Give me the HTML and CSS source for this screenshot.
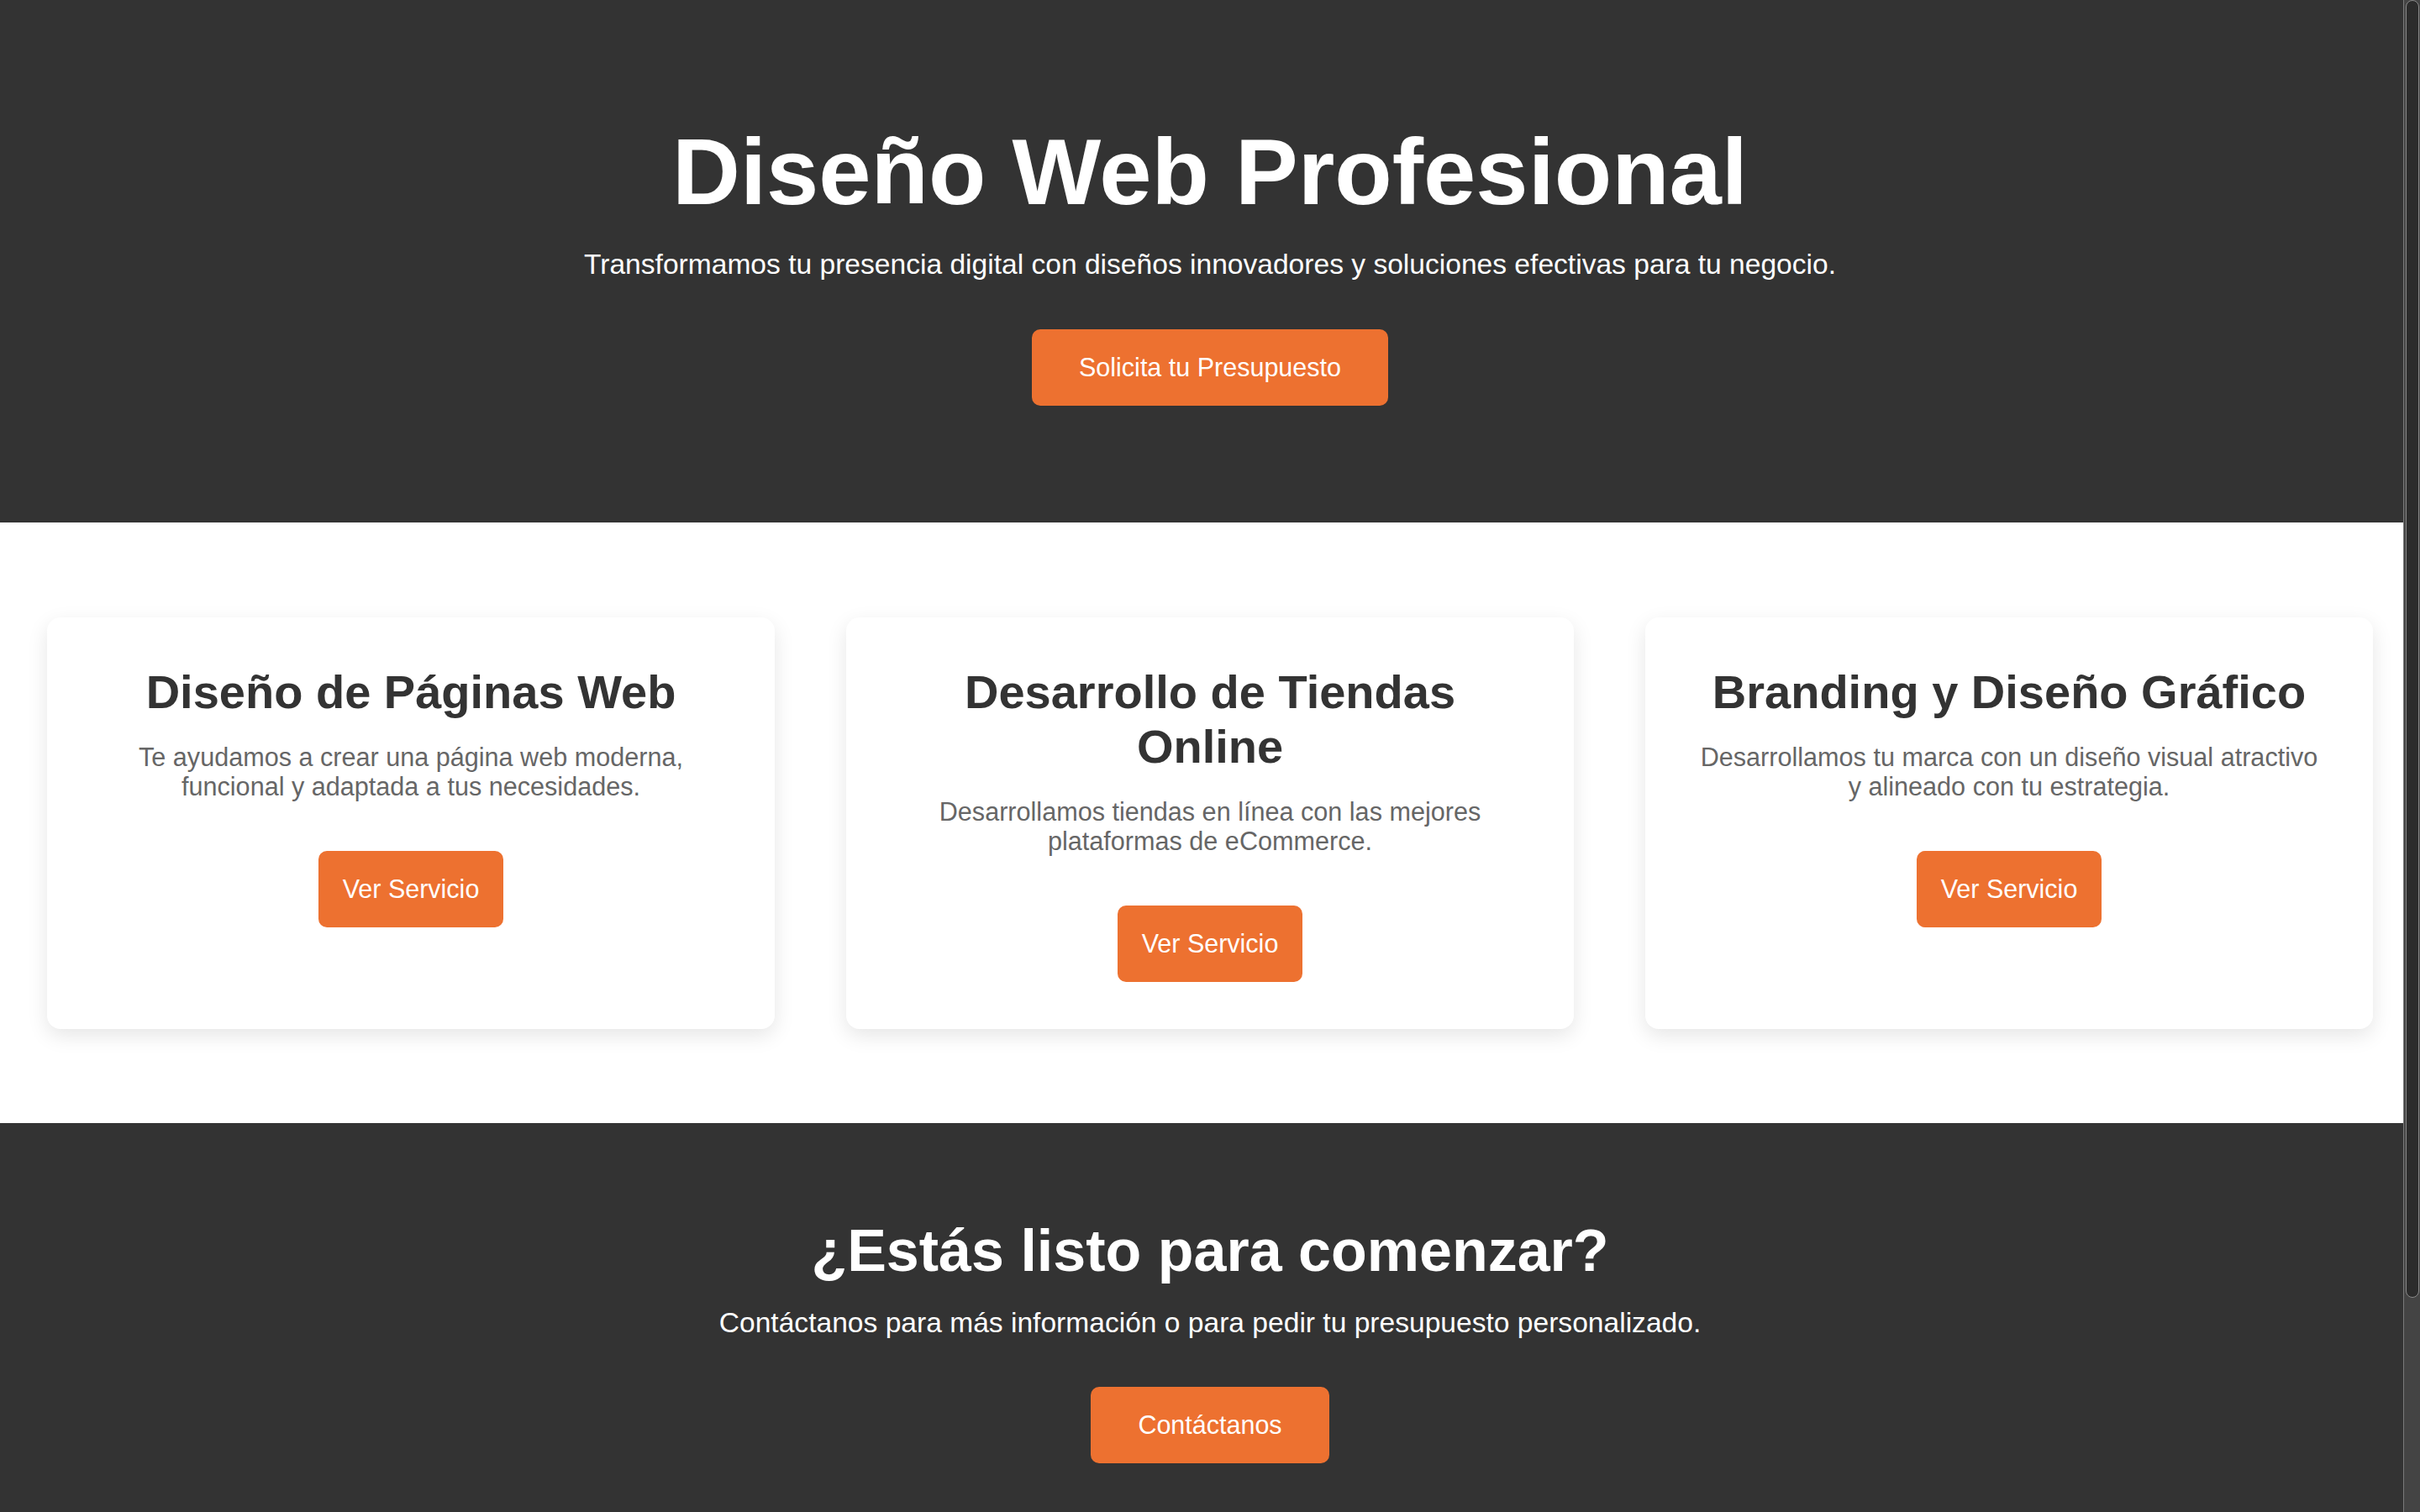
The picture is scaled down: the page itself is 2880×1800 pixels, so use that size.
FILE: index.html
```html
<!DOCTYPE html>
<html lang="es">
<head>
<meta charset="utf-8">
<title>Diseño Web Profesional</title>
<link rel="stylesheet" href="styles.css">
</head>
<body>
<header class="hero">
  <h1 class="hero-title">Diseño Web Profesional</h1>
  <p class="hero-text">Transformamos tu presencia digital con diseños innovadores y soluciones efectivas para tu negocio.</p>
  <a class="btn btn-wide" href="#">Solicita tu Presupuesto</a>
</header>

<section class="services">
  <article class="card">
    <h2 class="card-title">Diseño de Páginas Web</h2>
    <p class="card-text">Te ayudamos a crear una página web moderna, funcional y adaptada a tus necesidades.</p>
    <a class="btn" href="#">Ver Servicio</a>
  </article>
  <article class="card">
    <h2 class="card-title">Desarrollo de Tiendas Online</h2>
    <p class="card-text">Desarrollamos tiendas en línea con las mejores plataformas de eCommerce.</p>
    <a class="btn" href="#">Ver Servicio</a>
  </article>
  <article class="card">
    <h2 class="card-title">Branding y Diseño Gráfico</h2>
    <p class="card-text">Desarrollamos tu marca con un diseño visual atractivo y alineado con tu estrategia.</p>
    <a class="btn" href="#">Ver Servicio</a>
  </article>
</section>

<section class="cta">
  <h2 class="cta-title">¿Estás listo para comenzar?</h2>
  <p class="cta-text">Contáctanos para más información o para pedir tu presupuesto personalizado.</p>
  <a class="btn btn-wide" href="#">Contáctanos</a>
</section>

<div class="scrollbar" aria-hidden="true"><div class="scrollbar-thumb"></div></div>
</body>
</html>
```

FILE: styles.css
```css
html, body {
  margin: 0;
  padding: 0;
}

body {
  font-family: "Liberation Sans", Arial, sans-serif;
  background: #ffffff;
  color: #333333;
}

.hero {
  background: #333333;
  color: #ffffff;
  text-align: center;
  padding: 140px 0 139px;
}

.hero-title {
  font-size: 112px;
  font-weight: 700;
  line-height: normal;
  margin: 0 0 27px;
}

.hero-text {
  font-size: 33.6px;
  line-height: normal;
  margin: 0 0 58px;
}

.btn {
  display: inline-block;
  background: #ed7130;
  color: #ffffff;
  text-decoration: none;
  font-size: 30.5px;
  line-height: normal;
  padding: 28px 29px;
  border-radius: 10px;
}

.btn-wide {
  padding: 28px 56px;
}

.services {
  display: grid;
  grid-template-columns: repeat(3, 1fr);
  gap: 85px;
  padding: 113px 56px 112px;
  background: #ffffff;
}

.card {
  background: #ffffff;
  border-radius: 16px;
  box-shadow: 0 8px 24px rgba(0, 0, 0, 0.1);
  padding: 56px;
  text-align: center;
}

.card-title {
  font-size: 56px;
  font-weight: 700;
  line-height: normal;
  color: #333333;
  margin: 0 0 28px;
}

.card-text {
  font-size: 30.6px;
  line-height: normal;
  color: #666666;
  margin: 0 0 59px;
}

.cta {
  background: #333333;
  color: #ffffff;
  text-align: center;
  padding: 112px 0 356px;
}

.cta-title {
  font-size: 70px;
  font-weight: 700;
  line-height: normal;
  margin: 0 0 27px;
}

.cta-text {
  font-size: 33.6px;
  line-height: normal;
  margin: 0 0 57px;
}

.scrollbar {
  position: fixed;
  top: 0;
  right: 0;
  width: 20px;
  height: 100vh;
  background: #444444;
  border-left: 1px solid #7a7a7a;
  box-sizing: border-box;
}

.scrollbar-thumb {
  margin-left: 2px;
  width: 16px;
  height: 1545px;
  background: #2c2c2c;
  border: 1px solid #8a8a8a;
  border-radius: 8px;
  box-sizing: border-box;
}
```
